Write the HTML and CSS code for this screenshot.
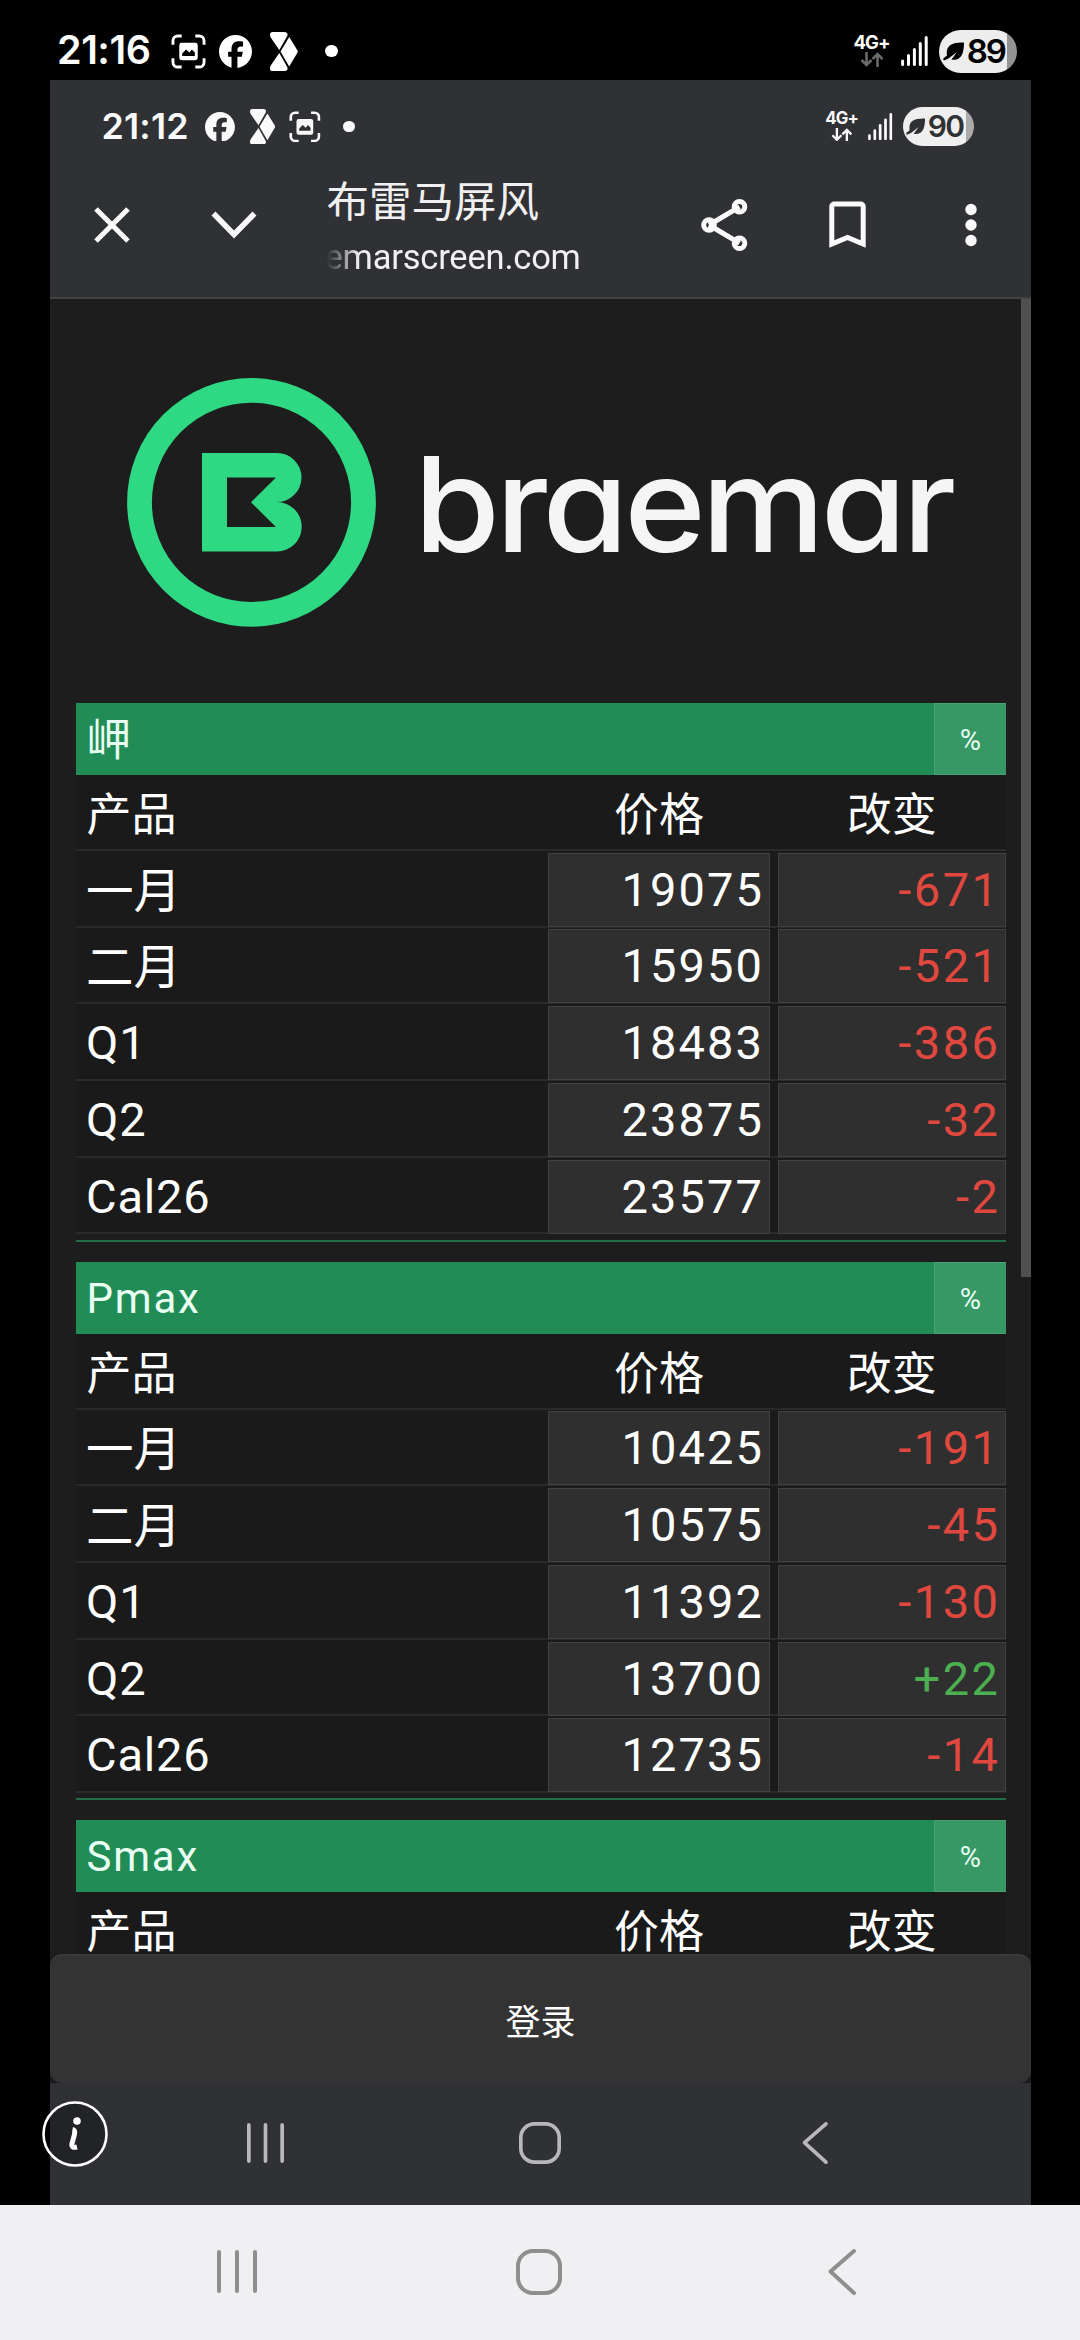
FILE: index.html
```html
<!DOCTYPE html>
<html lang="zh-CN">
<head>
<meta charset="utf-8">
<title>布雷马屏风</title>
<link rel="stylesheet" href="styles.css">
</head>
<body>
<svg class="defs" aria-hidden="true">
  <symbol id="capture" viewBox="0 0 36 36">
    <path d="M2 11V7a5 5 0 0 1 5-5h4M25 2h4a5 5 0 0 1 5 5v4M34 25v4a5 5 0 0 1-5 5h-4M11 34H7a5 5 0 0 1-5-5v-4" fill="none" stroke="currentColor" stroke-width="3"/>
    <path fill-rule="evenodd" fill="currentColor" d="M11 9h14a2.500 2.500 0 0 1 2.500 2.500v13A2.500 2.500 0 0 1 25 27H11a2.500 2.500 0 0 1-2.500-2.500v-13A2.500 2.500 0 0 1 11 9zM11.500 22.500h13v-3.500l-3-3-2.500 3-3.500-3-4 4z"/>
  </symbol>
  <symbol id="facebook" viewBox="0 0 24 24">
    <path fill="currentColor" d="M24 12.070C24 5.400 18.630 0 12 0S0 5.400 0 12.070c0 5.700 3.900 10.400 9.100 11.700v-8H6.600V12.100h2.500v-1.600c0-4 1.800-5.900 5.800-5.900.8 0 2 .1 2.600.3v3.400h-1.400c-2 0-2.700.8-2.700 2.700v1.100h3.900l-.7 3.700h-3.200V24C19.400 23.200 24 18.200 24 12.070z"/>
  </symbol>
  <symbol id="facets" viewBox="0 0 28 39">
    <path fill="currentColor" d="M2.500 0h12q2 0 3 1.500v2L9.300 18 .4 5Q-1 0 2.500 0zM19.200 5l8.300 13.500q.5 1 0 2L19.200 34.500 10.500 19.500zM9.300 21l8.200 14.500v2Q16.500 39 14.500 39h-12Q-1 39 .4 34z"/>
  </symbol>
  <symbol id="arrows" viewBox="0 0 24 15">
    <path d="M6.500 0v13M1.500 8l5 5 5-5M17.500 15V2M12.500 7l5-5 5 5" fill="none" stroke="currentColor" stroke-width="2.600"/>
  </symbol>
  <symbol id="signal" viewBox="0 0 27 30">
    <path d="M1.600 25v3.500M7.500 19.500v9M13.400 13.500v15M19.300 7.500v21M25.200 1.500v27" stroke="currentColor" stroke-width="3" stroke-linecap="round"/>
  </symbol>
  <symbol id="leaf" viewBox="0 0 21 19">
    <path fill="currentColor" d="M4 13.500C2.500 4 8 0 21 .500 21 12 18 19 8.500 17.500L14 10 5.500 16.500 1 18.500Q-.5 17 .8 16z"/>
  </symbol>
</svg>

<div class="phone">
  <header class="status status-outer">
    <span class="clock">21:16</span>
    <svg class="i-capture"><use href="#capture"/></svg>
    <svg class="i-fb"><use href="#facebook"/></svg>
    <svg class="i-facets"><use href="#facets"/></svg>
    <i class="dot"></i>
    <div class="net"><span>4G+</span><svg class="dim"><use href="#arrows"/></svg></div>
    <svg class="i-signal"><use href="#signal"/></svg>
    <div class="battery"><svg><use href="#leaf"/></svg><span>89</span></div>
  </header>

  <main class="screen">
    <header class="status status-inner">
      <span class="clock">21:12</span>
      <svg class="i-fb"><use href="#facebook"/></svg>
      <svg class="i-facets"><use href="#facets"/></svg>
      <svg class="i-capture"><use href="#capture"/></svg>
      <i class="dot"></i>
      <div class="net"><span>4G+</span><svg><use href="#arrows"/></svg></div>
      <svg class="i-signal"><use href="#signal"/></svg>
      <div class="battery"><svg><use href="#leaf"/></svg><span>90</span></div>
    </header>

    <nav class="toolbar">
      <svg class="t-close" viewBox="0 0 36 36"><path d="M2 2l32 32M34 2L2 34"/></svg>
      <svg class="t-down" viewBox="0 0 46 28"><path d="M2.500 2.500L23 23.500 43.500 2.500"/></svg>
      <div class="page-id">
        <div class="page-title">布雷马屏风</div>
        <div class="page-url"><span>emarscreen.com</span></div>
      </div>
      <svg class="t-share" viewBox="0 0 47 52"><path d="M8 26L38.500 7.800M8 26l30.500 18.200"/><g class="node"><circle cx="8" cy="26" r="5.300"/><circle cx="38.500" cy="7.800" r="5.300"/><circle cx="38.500" cy="44.200" r="5.300"/></g></svg>
      <svg class="t-mark" viewBox="0 0 37 47"><path d="M2.800 43V5.500a2.500 2.500 0 0 1 2.500-2.500h26.400a2.500 2.500 0 0 1 2.500 2.500V43L18.500 36.500z"/></svg>
      <svg class="t-more" viewBox="0 0 12 44"><circle cx="6" cy="6.500" r="5.700"/><circle cx="6" cy="22" r="5.700"/><circle cx="6" cy="37.500" r="5.700"/></svg>
    </nav>

    <div class="content">
      <div class="brand">
        <svg viewBox="0 0 981 404">
          <circle cx="201.500" cy="203.300" r="112" fill="none" stroke="#2fd882" stroke-width="24.800"/>
          <path fill="#2fd882" fill-rule="evenodd" d="M152 154h75a24.500 24.500 0 0 1 0 49 24.500 24.500 0 0 1 0 49.500h-75zM177 178.500v49.500h49L201 203.300l25-24.800z"/>
          <text class="wordmark" x="364" y="252.500" textLength="538" lengthAdjust="spacingAndGlyphs">braemar</text>
        </svg>
      </div>

      <section class="board">
        <h2 class="zh"><span>岬</span><button>%</button></h2>
        <div class="cols"><span>产品</span><span>价格</span><span>改变</span></div>
        <div class="row zh"><span>一月</span><b>19075</b><b class="neg">-671</b></div>
        <div class="row zh"><span>二月</span><b>15950</b><b class="neg">-521</b></div>
        <div class="row"><span>Q1</span><b>18483</b><b class="neg">-386</b></div>
        <div class="row"><span>Q2</span><b>23875</b><b class="neg">-32</b></div>
        <div class="row"><span>Cal26</span><b>23577</b><b class="neg">-2</b></div>
      </section>
      <section class="board">
        <h2><span>Pmax</span><button>%</button></h2>
        <div class="cols"><span>产品</span><span>价格</span><span>改变</span></div>
        <div class="row zh"><span>一月</span><b>10425</b><b class="neg">-191</b></div>
        <div class="row zh"><span>二月</span><b>10575</b><b class="neg">-45</b></div>
        <div class="row"><span>Q1</span><b>11392</b><b class="neg">-130</b></div>
        <div class="row"><span>Q2</span><b>13700</b><b class="pos">+22</b></div>
        <div class="row"><span>Cal26</span><b>12735</b><b class="neg">-14</b></div>
      </section>
      <section class="board">
        <h2><span>Smax</span><button>%</button></h2>
        <div class="cols"><span>产品</span><span>价格</span><span>改变</span></div>
      </section>
      <div class="scrollbar"></div>
    </div>

    <div class="login-wrap"><button class="login">登录</button></div>

    <nav class="keys keys-inner">
      <svg class="k-recent" viewBox="0 0 40 43"><path d="M2 2v39M20 2v39M38 2v39"/></svg>
      <svg class="k-home" viewBox="0 0 46 46"><rect x="2" y="2" width="42" height="42" rx="15"/></svg>
      <svg class="k-back" viewBox="0 0 28 46"><path d="M26 2L2.500 22.500 26 44"/></svg>
    </nav>
    <svg class="info" viewBox="0 0 66 66"><circle cx="33" cy="33" r="31.500"/><circle class="fill" cx="35" cy="20" r="3.800"/><path d="M30.500 28.500q3 .5 2 5l-2.500 9q-1 5 5 3.500"/></svg>
  </main>

  <nav class="keys keys-outer">
    <svg class="k-recent" viewBox="0 0 40 43"><path d="M2 2v39M20 2v39M38 2v39"/></svg>
    <svg class="k-home" viewBox="0 0 46 46"><rect x="2" y="2" width="42" height="42" rx="15"/></svg>
    <svg class="k-back" viewBox="0 0 28 46"><path d="M26 2L2.500 22.500 26 44"/></svg>
  </nav>
</div>
</body>
</html>
```
FILE: styles.css
```css
* { box-sizing: border-box; }
body { margin: 0; background: #000; }
svg { display: block; flex: none; }
.defs { display: none; }
button { font: inherit; color: inherit; border: 0; padding: 0; margin: 0; }

.phone {
  width: 1080px;
  height: 2340px;
  display: flex;
  flex-direction: column;
  overflow: hidden;
  color: #fff;
  font-family: Inter, "Noto Sans CJK SC", sans-serif;
}

.status { display: flex; align-items: center; flex: none; }
.status-outer { font-size: 10px; height: 80px; padding: 22px 63px 0 57px; }
.status-inner { font-size: 9.07px; height: 89px; padding: 4px 57.500px 0 51.500px; color: #fafafa; }
.clock { font-size: 3.950em; line-height: 1; font-weight: 600; letter-spacing: -.02em; width: 2.456em; white-space: nowrap; }
.status-outer .clock { letter-spacing: -.012em; }
.status-inner .clock { letter-spacing: .005em; }
.i-capture { width: 3.500em; height: 3.500em; margin-left: 1.650em; }
.i-fb { width: 3.300em; height: 3.300em; margin-left: 1.350em; }
.i-facets { width: 2.800em; height: 3.900em; margin-left: 1.750em; }
.status-inner .i-fb { margin-left: 1.700em; }
.status-inner .i-facets { margin-left: 1.700em; }
.status-inner .i-capture { margin-left: 1.500em; }
.dot { width: 1.270em; height: 1.270em; margin-left: 2.750em; border-radius: 50%; background: currentColor; }
.status-inner .dot { margin-left: 2.450em; }
.net { width: 3.400em; margin-left: auto; display: flex; flex-direction: column; align-items: center; gap: .3em; }
.net span { font-size: 1.850em; line-height: .78; font-weight: 700; letter-spacing: -.05em; }
.net svg { width: 2.400em; height: 1.500em; }
.net .dim { color: #6a6a6a; }
.i-signal { width: 2.700em; height: 3em; margin-left: 1.250em; }
.battery {
  display: flex; align-items: center;
  width: 7.800em; height: 4.300em; margin-left: 1.100em; padding-left: .4em;
  border-radius: 2.150em;
  background: linear-gradient(90deg, #ededed 87.500%, #929292 87.500%);
  color: #000;
}
.status-inner .battery { background: linear-gradient(90deg, #efefef 89%, #aaa 89%); color: #303134; }
.battery svg { width: 2.100em; height: 1.900em; }
.battery span { font-size: 3.300em; line-height: 1; font-weight: 600; letter-spacing: -.06em; margin-left: .08em; }

.screen {
  position: relative;
  width: 981px;
  height: 2125px;
  margin-left: 50px;
  flex: none;
  display: flex;
  flex-direction: column;
  background: #303135;
}

.toolbar {
  height: 130px;
  flex: none;
  display: flex;
  padding-left: 44px;
  border-bottom: 2px solid #434343;
  fill: none;
  stroke: #fafafa;
  stroke-width: 5;
}
.t-close { width: 36px; height: 36px; margin-top: 37.500px; }
.t-down { width: 46px; height: 28px; margin: 41.500px 0 0 81px; stroke-width: 5.500; }
.page-id { width: 320px; margin-left: 69.500px; }
.page-title { font: 42.500px/56px "Noto Sans CJK SC", sans-serif; margin-top: 1.500px; color: #f0f0f0; }
.page-url { font: 34.500px/44px Roboto, sans-serif; margin-top: 8px; color: #f0f0f0; letter-spacing: -.2px; }
.page-url span {
  display: block;
  width: 260px;
  margin-left: -2px;
  -webkit-mask-image: linear-gradient(90deg, transparent 2px, #000 34px);
  mask-image: linear-gradient(90deg, transparent 2px, #000 34px);
}
.t-share { width: 47px; height: 52px; margin: 29.500px 0 0 54.500px; }
.t-mark { width: 37px; height: 47px; margin: 32px 0 0 81px; }
.t-more { width: 12px; height: 44px; margin: 33.500px 0 0 99px; fill: #fafafa; stroke: none; }

.content {
  position: relative;
  height: 1655px;
  flex: none;
  overflow: hidden;
  background: #1d1d1d;
  padding-right: 25.500px;
  padding-left: 25.500px;
}
.brand { height: 404px; margin: 0 -25.500px; }
.brand svg { width: 981px; height: 404px; }
.wordmark {
  font-family: Inter, sans-serif;
  font-size: 132px;
  font-weight: 500;
  letter-spacing: -4px;
  font-feature-settings: "cv11";
  fill: #f6f5f5;
}
.board {
  height: 538.500px;
  margin-bottom: 20.200px;
  border-bottom: 2px solid #236e49;
  font-family: Roboto, "Noto Sans CJK SC", sans-serif;
  background: linear-gradient(#1a1a1a 531px, #1d1d1d 531px);
}
.board h2 {
  display: flex;
  justify-content: space-between;
  height: 72px;
  margin: 0;
  padding-left: 11px;
  background: #218c56;
  font-size: 42px;
  line-height: 74px;
  font-weight: 400;
  letter-spacing: 1.800px;
  color: #e8fff2;
}
.board h2.zh span { font-size: 44.500px; line-height: 77px; }
.board h2 button { width: 71.500px; background: #379866; font-size: 29px; line-height: 72px; border: 1px solid #48a274; border-right: 0; letter-spacing: 0; }
.cols, .row { display: grid; grid-template-columns: 472.500px 222px 8px 227.500px; border-bottom: 2px solid #2a2a2a; }
.cols { height: 76px; font-size: 45px; line-height: 82px; text-align: center; }
.cols span { height: 74px; }
.cols span:first-child { text-align: left; padding-left: 11px; }
.cols span:last-child { grid-column: 4; }
.row { height: 76.700px; padding: 1.800px 0 1px; font-size: 47px; line-height: 72px; }
.row span { height: 72px; padding-left: 10.500px; letter-spacing: .8px; line-height: 74px; }
.row.zh span { font-size: 47.500px; line-height: 79px; letter-spacing: 0; }
.row b {
  background: #2f2f2f;
  border: 1.500px solid #414141;
  font-weight: 400;
  letter-spacing: 2.100px;
  text-align: right;
  padding-right: 5px;
}
.row b:last-child { grid-column: 4; letter-spacing: 2.500px; padding-right: 4px; }
.row .neg { color: #e0483f; }
.row .pos { color: #4caf50; }
.scrollbar { position: absolute; top: 0; right: 0; width: 10.500px; height: 978px; background: #505050; }

.login-wrap { height: 129px; flex: none; background: #1b1b1b; }
.login {
  display: block;
  width: 100%;
  height: 129px;
  background: #333;
  border-top: 2px solid #3a3a3a;
  border-radius: 12px;
  font: 35px/1 "Noto Sans CJK SC", sans-serif;
}

.keys { display: flex; fill: none; stroke-width: 4; stroke-linecap: round; stroke-linejoin: round; align-items: center; }
.keys-inner { height: 120px; stroke: #b8b8bb; padding-left: 196.500px; }
.keys-inner .k-recent { width: 37px; height: 40px; }
.keys-inner .k-home { width: 42px; height: 42px; margin-left: 235px; }
.keys-inner .k-back { width: 26px; height: 42px; margin-left: 241.500px; }
.keys-outer { height: 135px; background: #f0f0f2; stroke: #8e8e8e; padding: 0 0 2px 217px; }
.keys-outer .k-recent { width: 40px; height: 43px; }
.keys-outer .k-home { width: 46px; height: 46px; margin-left: 259px; }
.keys-outer .k-back { width: 28px; height: 46px; margin-left: 266px; }

.info { position: absolute; left: -8.500px; top: 2020.500px; width: 66px; height: 66px; fill: rgba(0,0,0,.28); stroke: #fff; stroke-width: 2.600; }
.info path { fill: none; stroke-width: 5; }
.info .fill { fill: #fff; stroke: none; }
```
